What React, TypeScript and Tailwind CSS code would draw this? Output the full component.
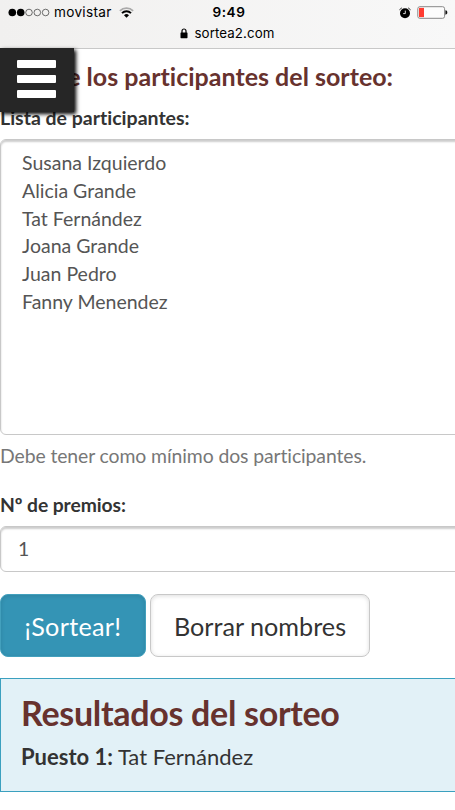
const participants = [
  'Susana Izquierdo',
  'Alicia Grande',
  'Tat Fernández',
  'Joana Grande',
  'Juan Pedro',
  'Fanny Menendez',
];

function SignalDots() {
  return (
    <svg className="h-[9px] w-[42px]" viewBox="0 0 42 9">
      {[4.3, 12.7, 21, 29.3, 37.6].map((cx, i) => (
        <circle key={cx} cx={cx} cy="4.5" r={i < 2 ? 3.8 : 3.3} fill={i < 2 ? '#000' : 'none'} stroke={i < 2 ? 'none' : '#333'} strokeWidth="0.7" />
      ))}
    </svg>
  );
}

function Wifi() {
  return (
    <svg className="h-[11px] w-[15px]" viewBox="0 0 15 11" fill="none">
      <path d="M.9 3.8a9.3 9.3 0 0 1 13.2 0" stroke="#aaa" strokeWidth="1.8" />
      <path d="M3 6.2a6.3 6.3 0 0 1 9 0" stroke="#000" strokeWidth="1.9" />
      <path d="M5 8.2a3.6 3.6 0 0 1 5 0L7.5 10.7z" fill="#000" />
    </svg>
  );
}

function Alarm() {
  return (
    <svg className="h-3 w-3" viewBox="0 0 12 12" fill="none">
      <circle cx="6" cy="6.3" r="5" fill="#000" />
      <path d="M.6 3.2A3 3 0 0 1 3 .9M9 .9a3 3 0 0 1 2.4 2.3" stroke="#555" strokeWidth="1" />
      <path d="M6.3 3.6v3H4.2" stroke="#ddd" strokeWidth="1" />
    </svg>
  );
}

function Battery() {
  return (
    <svg className="h-[13px] w-[31px]" viewBox="0 0 31 13">
      <rect x=".8" y=".7" width="26.8" height="11.6" rx="2" fill="#fcfcfc" stroke="#888" strokeWidth="1" />
      <rect x="2" y="1.9" width="5" height="9.2" fill="#ff3b30" />
      <path d="M28.4 4.3c1.6.3 1.9 1.2 1.9 2.2s-.3 1.9-1.9 2.2z" fill="#111" />
    </svg>
  );
}

function Lock() {
  return (
    <svg className="h-[11px] w-2" viewBox="0 0 8 11">
      <rect x=".5" y="4.5" width="7" height="5.7" rx=".6" fill="#000" />
      <path d="M2 5V3a2 2 0 0 1 4 0v2" fill="none" stroke="#000" strokeWidth="1.2" />
    </svg>
  );
}

export default function App() {
  return (
    <div className="relative h-[810px] w-[455px] overflow-hidden bg-white font-['Lato',sans-serif] text-[#333] [font-variant-ligatures:none]">
      <header className="flex h-[49px] flex-col border-b border-[#c8c8c8] bg-linear-to-r from-[#f1f0ef] to-[#f8f8f8] font-['Inter',sans-serif] text-black">
        <div className="grid h-[25px] grid-cols-3 items-center pr-[7px] pl-[8px]">
          <div className="flex items-center">
            <SignalDots />
            <span className="ml-[4px] text-[13.6px] tracking-[0.3px]">movistar</span>
            <span className="ml-[7px]"><Wifi /></span>
          </div>
          <span className="pl-[2px] text-center text-[13.6px] font-semibold tracking-[0.5px]">9:49</span>
          <div className="flex items-center justify-end gap-[6px]">
            <Alarm />
            <Battery />
          </div>
        </div>
        <div className="flex h-[17px] items-center justify-center gap-[6px]">
          <Lock />
          <span className="text-[13.3px] tracking-[0.1px]">sortea2.com</span>
        </div>
      </header>

      <button aria-label="Menú" className="absolute top-[48px] left-0 flex h-[64px] w-[74px] flex-col items-start justify-center gap-[7px] bg-[#262626] pb-[3px] pl-[17px] shadow-[2px_2px_4px_#000]">
        <span className="h-[8px] w-[39px] rounded-[1px] bg-white" />
        <span className="h-[8px] w-[39px] rounded-[1px] bg-white" />
        <span className="h-[8px] w-[39px] rounded-[1px] bg-white" />
      </button>

      <main className="w-[475px]">
        <h3 className="mt-[13px] text-[25px] leading-[28px] font-bold tracking-[0.01px] whitespace-nowrap text-[#67322e]">Escribe los participantes del sorteo:</h3>
        <label className="mt-[14px] block text-[19.5px] leading-[28px] font-bold">Lista de participantes:</label>
        <div className="mt-[7px] h-[296px] rounded-[6px] border-[1.5px] border-[#c8c8c8] px-[21px] pt-[9px] text-[19.5px] leading-[27.75px] text-[#555] shadow-[inset_0_2px_2px_rgba(0,0,0,0.2)]">
          {participants.map((name) => (
            <div key={name}>{name}</div>
          ))}
        </div>
        <p className="mt-[7px] text-[19.4px] leading-[28px] tracking-[-0.1px] text-[#777]">Debe tener como mínimo dos participantes.</p>
        <label className="mt-[21px] block text-[19.3px] leading-[28px] font-bold tracking-[-0.08px]">Nº de premios:</label>
        <div className="mt-[7px] flex h-[46px] items-center rounded-[6px] border-[1.5px] border-[#c8c8c8] px-[17px] pb-[1px] text-[19.4px] text-[#555] shadow-[inset_0_2px_2px_rgba(0,0,0,0.2)]">1</div>
        <div className="mt-[22px] flex gap-[4px] text-[25.2px]">
          <button className="h-[63px] w-[146px] rounded-[8px] border border-[#43a0bd] bg-[#3494b5] pt-[2px] tracking-[0.3px] text-white shadow-[inset_0_1px_4px_rgba(0,0,0,0.12)]">¡Sortear!</button>
          <button className="h-[63px] w-[220px] rounded-[8px] border-[1.5px] border-[#c8c8c8] bg-white pt-[2px] shadow-[inset_0_1px_4px_rgba(0,0,0,0.14)]">Borrar nombres</button>
        </div>
        <section className="mt-[21px] h-[114px] border-[1.5px] border-[#3ba0bf] bg-[#e2f1f7] pt-[13px] pl-[20px]">
          <h2 className="text-[34px] leading-[42px] font-bold tracking-[-0.3px] text-[#67322e]">Resultados del sorteo</h2>
          <p className="mt-[8px] text-[22px] leading-[30px]"><b className="font-bold">Puesto 1:</b> Tat Fernández</p>
        </section>
      </main>
    </div>
  );
}
